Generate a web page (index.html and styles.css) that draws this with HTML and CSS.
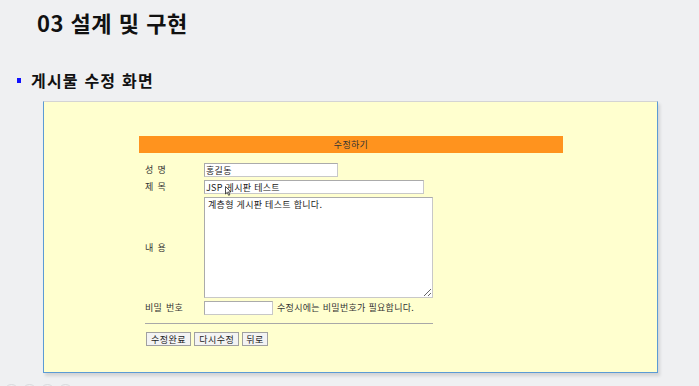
FILE: index.html
```html
<!DOCTYPE html>
<html lang="ko">
<head>
    <meta charset="UTF-8">
    <title>03 설계 및 구현</title>
    <link rel="stylesheet" href="styles.css">
</head>
<body>
    <h1 class="title">03 설계 및 구현</h1>
    <h2 class="sub"><span class="bullet"></span>게시물 수정 화면</h2>

    <div class="shot">
        <div class="board">
            <div class="board-head">수정하기</div>
            <div class="form">
                <div class="label">성 명</div>
                <div class="field"><input class="in in-name" type="text" value="홍길동"></div>

                <div class="label">제 목</div>
                <div class="field cursor-wrap">
                    <input class="in in-title" type="text" value="JSP 게시판 테스트">
                    <svg class="cursor" width="7" height="10" viewBox="0 0 7 10">
                        <path d="M0.5 0.5 L0.5 8 L2.3 6.3 L3.6 9.3 L4.8 8.8 L3.5 5.9 L6 5.9 Z" fill="#fff" stroke="#222" stroke-width="0.8"/>
                    </svg>
                </div>

                <div class="label label-mid">내 용</div>
                <div class="field"><textarea class="in in-body">계층형 게시판 테스트 합니다.</textarea></div>

                <div class="label">비밀 번호</div>
                <div class="field"><input class="in in-pass" type="password"><span class="hint">수정시에는 비밀번호가 필요합니다.</span></div>
            </div>
            <div class="line"></div>
            <div class="btns">
                <button class="btn">수정완료</button>
                <button class="btn">다시수정</button>
                <button class="btn">뒤로</button>
            </div>
        </div>
    </div>

    <div class="dots">
        <span></span><span></span><span></span><span></span>
    </div>
</body>
</html>
```

FILE: styles.css
```css
*{
    margin: 0;
    padding: 0;
    box-sizing: border-box;
}
body{
    background: #eff0f2;
    font-family: "Noto Sans CJK KR", "Noto Sans", sans-serif;
    color: #111;
    width: 699px;
    height: 386px;
    overflow: hidden;
}
.title{
    font-size: 22px;
    font-weight: bold;
    line-height: 24px;
    padding: 10px 0 0 37px;
    height: 60px;
    letter-spacing: 0.5px;
}
.sub{
    display: flex;
    align-items: center;
    font-size: 16px;
    font-weight: bold;
    line-height: 20px;
    padding: 10px 0 0 17px;
    margin-bottom: 11px;
    letter-spacing: 1.2px;
}
.bullet{
    width: 4px;
    height: 5px;
    background: #1010ff;
    margin-right: 10px;
}
.shot{
    margin-left: 43px;
    width: 615px;
    height: 272px;
    background: #ffffcf;
    border: 1px solid #5b9bd5;
    border-top-color: #d4d4d4;
    box-shadow: 2px 3px 3px rgba(0,0,0,0.12);
    padding: 34px 0 0 95px;
}
.board{
    width: 424px;
    font-size: 9px;
    letter-spacing: 0.3px;
    color: #333;
}
.board-head{
    height: 17px;
    line-height: 17px;
    background: #ff931e;
    text-align: center;
    color: #333;
    margin-bottom: 10px;
}
.form{
    display: grid;
    grid-template-columns: 65px 1fr;
    row-gap: 3px;
}
.label{
    padding-left: 6px;
    line-height: 14px;
    word-spacing: 1px;
}
.label-mid{
    align-self: center;
}
.field{
    display: flex;
    align-items: center;
}
.cursor-wrap{
    position: relative;
}
.cursor{
    position: absolute;
    left: 21px;
    top: 6px;
}
.in{
    font-family: "Noto Sans CJK KR", sans-serif;
    font-size: 9px;
    letter-spacing: 0.3px;
    color: #222;
    background: #fff;
    border: 1px solid #ababab;
    border-right-color: #c8c8c8;
    border-bottom-color: #c8c8c8;
    padding: 0 1px;
    height: 14px;
    outline: none;
}
.in-name{
    width: 134px;
}
.in-title{
    width: 220px;
}
.in-body{
    width: 229px;
    height: 101px;
    padding: 1px 3px;
    resize: both;
    line-height: 12px;
}
.in-pass{
    width: 69px;
}
.hint{
    margin-left: 4px;
    line-height: 14px;
}
.line{
    width: 288px;
    margin: 8px 0 0 6px;
    border-top: 1px solid #a8a8a8;
}
.btns{
    display: flex;
    gap: 3px;
    margin: 8px 0 0 7px;
}
.btn{
    font-family: "Noto Sans CJK KR", sans-serif;
    font-size: 9px;
    letter-spacing: 0.5px;
    color: #222;
    height: 14px;
    line-height: 11px;
    padding: 0 4px;
    background: #f3f3f3;
    border: 1px solid #a0a0a0;
}
.btn:last-child{
    padding: 0 3px;
}
.dots{
    display: flex;
    gap: 3px;
    margin: 11px 0 0 4px;
}
.dots span{
    flex: none;
    width: 15px;
    height: 15px;
    border: 1px solid #d8d9dc;
    border-radius: 50%;
}
```
